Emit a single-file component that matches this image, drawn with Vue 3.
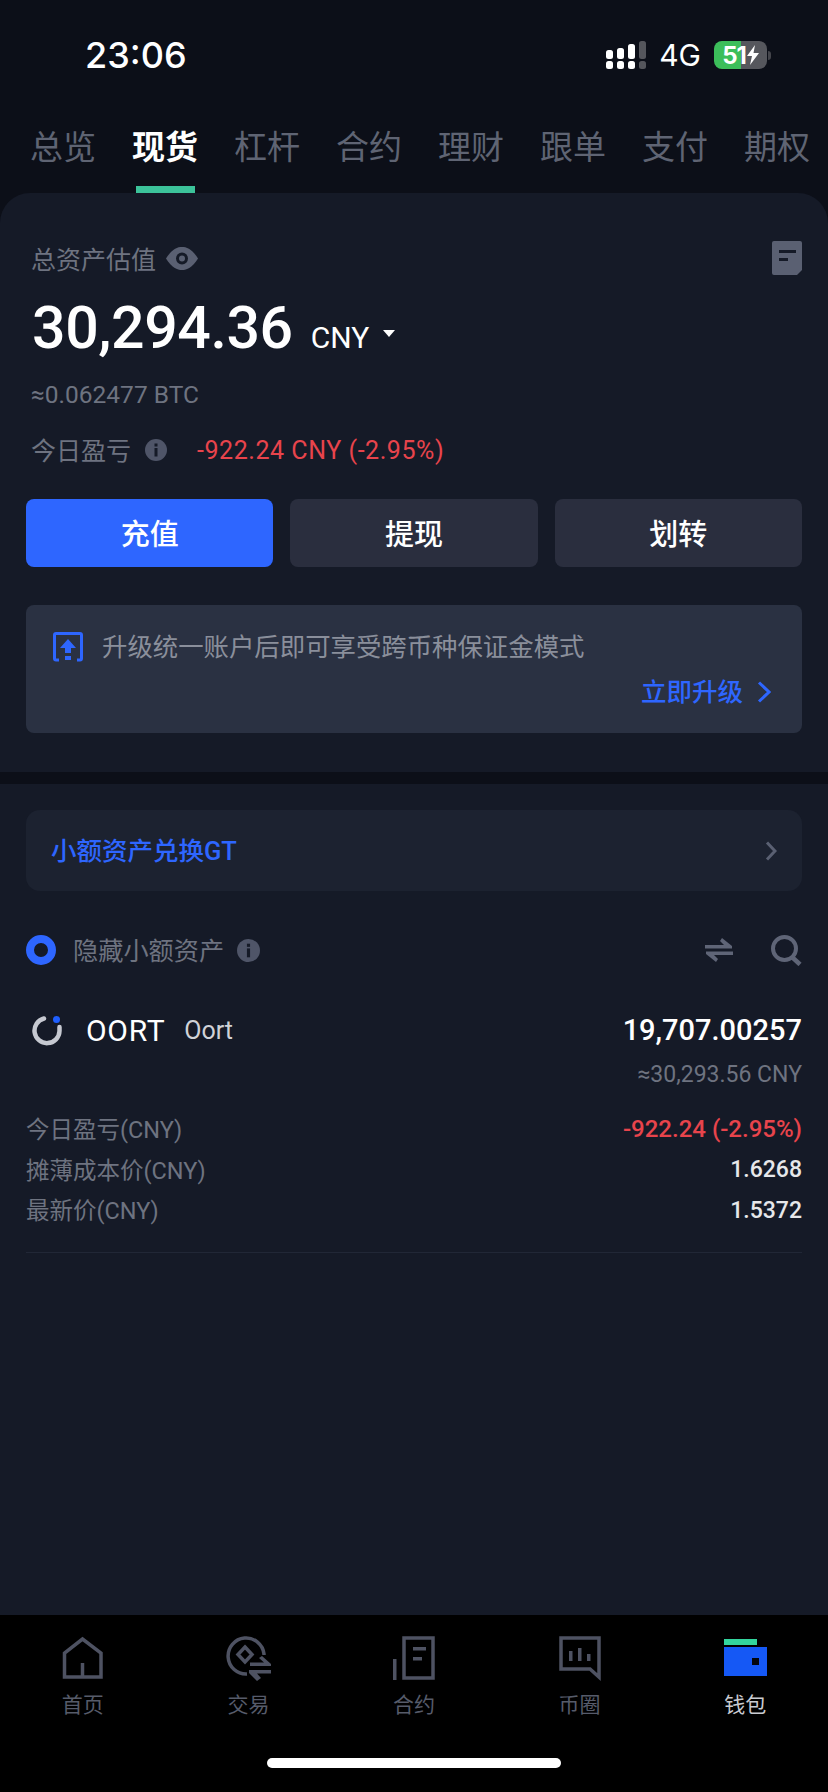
<template>
  <div class="page">
    <div class="status-bar">
      <span class="time">23:06</span>
      <div class="status-right">
        <svg class="signal" width="41" height="28" viewBox="0 0 41 28">
          <g fill="#fff">
            <rect x="0" y="9" width="7" height="9" rx="2.5" />
            <rect x="0" y="20" width="7" height="8" rx="2.5" />
            <rect x="11" y="7" width="7" height="11" rx="2.5" />
            <rect x="11" y="20" width="7" height="8" rx="2.5" />
            <rect x="22" y="3" width="7" height="15" rx="2.5" />
            <rect x="22" y="20" width="7" height="8" rx="2.5" />
          </g>
          <rect x="33" y="0" width="7" height="18" rx="2.5" fill="#55565c" />
          <rect x="33" y="20" width="7" height="8" rx="2.5" fill="#55565c" />
        </svg>
        <span class="net">4G</span>
        <div class="battery">
          <span class="battery-num">51</span>
          <svg width="12" height="20" viewBox="0 0 12 20"><path d="M8 0 L0 11 H5 L3 20 L12 8 H6.5 Z" fill="#fff" /></svg>
        </div>
        <span class="battery-nub"></span>
      </div>
    </div>

    <nav class="top-tabs">
      <div v-for="tab in topTabs" :key="tab" class="top-tab" :class="{ active: tab === '现货' }">
        <span class="top-tab-label">{{ tab }}</span>
        <span class="top-tab-line"></span>
      </div>
    </nav>

    <section class="asset-card">
      <div class="asset-title">
        <span>总资产估值</span>
        <svg width="32" height="23" viewBox="0 0 32 23">
          <path d="M0 11.5 C6 2 11 0 16 0 C21 0 26 2 32 11.5 C26 21 21 23 16 23 C11 23 6 21 0 11.5 Z" fill="#5a6072" />
          <circle cx="16" cy="11.5" r="6" fill="#151a27" />
          <circle cx="16" cy="11.5" r="3" fill="#5a6072" />
        </svg>
        <svg class="doc-icon" width="30" height="34" viewBox="0 0 30 34">
          <path d="M2 0 H28 Q30 0 30 2 V29 L25 34 H2 Q0 34 0 32 V2 Q0 0 2 0 Z" fill="#5a6072" />
          <rect x="7" y="9" width="17" height="3" fill="#151a27" />
          <rect x="7" y="17" width="9" height="3" fill="#151a27" />
        </svg>
      </div>

      <div class="balance">
        <span class="balance-num">30,294.36</span>
        <span class="balance-unit">CNY</span>
        <span class="caret"></span>
      </div>
      <div class="btc">≈0.062477 BTC</div>
      <div class="today">
        <span class="today-label">今日盈亏</span>
        <svg class="info" width="22" height="22" viewBox="0 0 22 22">
          <circle cx="11" cy="11" r="11" fill="#4f5568" />
          <rect x="9.5" y="4.5" width="3" height="3" fill="#151a27" />
          <rect x="9.5" y="9" width="3" height="8.5" fill="#151a27" />
        </svg>
        <span class="loss today-loss">-922.24 CNY (-2.95%)</span>
      </div>

      <div class="actions">
        <button type="button" class="action primary">充值</button>
        <button type="button" class="action">提现</button>
        <button type="button" class="action">划转</button>
      </div>

      <div class="banner">
        <div class="banner-top">
          <svg width="30" height="30" viewBox="0 0 30 30">
            <path d="M6 28 H3 Q1.5 28 1.5 26.5 V3 Q1.5 1.5 3 1.5 H27 Q28.5 1.5 28.5 3 V26.5 Q28.5 28 27 28 H24" fill="none" stroke="#2e66ff" stroke-width="3" />
            <path d="M15 7 L23 16 H18 V21 H12 V16 H7 Z" fill="#2e66ff" />
            <rect x="12" y="24" width="6" height="4" fill="#2e66ff" />
          </svg>
          <span class="banner-text">升级统一账户后即可享受跨币种保证金模式</span>
        </div>
        <div class="banner-link">
          <span class="banner-link-text">立即升级</span>
          <svg width="14" height="22" viewBox="0 0 14 22"><path d="M2 1.5 L12 11 L2 20.5" fill="none" stroke="#2e66ff" stroke-width="3" /></svg>
        </div>
      </div>
    </section>

    <section class="assets">
      <div class="exchange">
        <span class="exchange-text">小额资产兑换GT</span>
        <svg width="12" height="20" viewBox="0 0 12 20"><path d="M2 1.5 L10 10 L2 18.5" fill="none" stroke="#5a6072" stroke-width="3" /></svg>
      </div>

      <div class="tools">
        <span class="radio"></span>
        <span class="tools-label">隐藏小额资产</span>
        <svg class="info" width="23" height="23" viewBox="0 0 22 22">
          <circle cx="11" cy="11" r="11" fill="#4f5568" />
          <rect x="9.5" y="4.5" width="3" height="3" fill="#151a27" />
          <rect x="9.5" y="9" width="3" height="8.5" fill="#151a27" />
        </svg>
        <svg class="swap" width="28" height="24" viewBox="0 0 28 24">
          <path d="M17 0 L27 8 V10.5 H0 V7 H19 L15 3 Z" fill="#5f6577" />
          <path d="M11 24 L1 16 V13.5 H28 V17 H9 L13 21 Z" fill="#5f6577" />
        </svg>
        <svg width="31" height="31" viewBox="0 0 31 31">
          <circle cx="13.5" cy="13.5" r="11.5" fill="none" stroke="#5f6577" stroke-width="4" />
          <path d="M21 22 L29 29.5" fill="none" stroke="#5f6577" stroke-width="4.5" />
        </svg>
      </div>

      <div class="coin">
        <svg class="coin-logo" width="32" height="32" viewBox="0 0 32 32">
          <path d="M13 4.5 A12.5 12.5 0 1 0 28.5 17 V13" fill="none" stroke="#c6c9d1" stroke-width="4.5" stroke-linecap="round" />
          <circle cx="25.5" cy="5.5" r="3.5" fill="#1f5fff" />
        </svg>
        <span class="coin-symbol">OORT</span>
        <span class="coin-name">Oort</span>
        <span class="coin-amount">19,707.00257</span>
      </div>
      <div class="coin-approx">≈30,293.56 CNY</div>

      <div class="detail-rows">
        <div v-for="row in rows" :key="row.label" class="detail-row">
          <span class="detail-label">{{ row.label }}</span>
          <span class="detail-value" :class="{ loss: row.loss }">{{ row.value }}</span>
        </div>
      </div>
      <div class="line"></div>
    </section>

    <footer class="tabbar">
      <div class="tabbar-items">
        <div class="tabbar-item">
          <svg width="42" height="44" viewBox="0 0 42 44">
            <path d="M2.5 41 V17 L20.5 3 L39 17 V41 Z M20.5 41 V27" fill="none" stroke="#4e5262" stroke-width="3.5" />
          </svg>
          <span>首页</span>
        </div>
        <div class="tabbar-item">
          <svg width="48" height="46" viewBox="0 0 48 46">
            <path d="M40 20 V19 A18 18 0 1 0 23 39" fill="none" stroke="#4e5262" stroke-width="3.5" />
            <path d="M21 12 L28 19.5 L21 27 L14 19.5 Z" fill="none" stroke="#4e5262" stroke-width="3.5" />
            <path d="M38 21 L47 29 V31 H26 V27.5 H40 L35 23 Z" fill="#4e5262" />
            <path d="M33 46 L25 38 V35 H47 V38.5 H33 L37 43 Z" fill="#4e5262" />
          </svg>
          <span>交易</span>
        </div>
        <div class="tabbar-item">
          <svg width="42" height="44" viewBox="0 0 42 44">
            <path d="M11 2 H40 V42 H11 Z" fill="none" stroke="#4e5262" stroke-width="3.5" />
            <rect x="0" y="23" width="3.5" height="21" fill="#4e5262" />
            <rect x="20" y="11" width="13" height="3.5" fill="#4e5262" />
            <rect x="20" y="21" width="9" height="3.5" fill="#4e5262" />
          </svg>
          <span>合约</span>
        </div>
        <div class="tabbar-item">
          <svg width="42" height="44" viewBox="0 0 42 44">
            <path d="M2 2 H40 V41 L31 33 H2 Z" fill="none" stroke="#4e5262" stroke-width="3.5" stroke-linejoin="miter" />
            <rect x="10" y="15" width="3.5" height="10" fill="#4e5262" />
            <rect x="19" y="12" width="3.5" height="13" fill="#4e5262" />
            <rect x="28" y="18" width="3.5" height="7" fill="#4e5262" />
          </svg>
          <span>币圈</span>
        </div>
        <div class="tabbar-item current">
          <svg class="wallet" width="44" height="44" viewBox="0 0 44 44">
            <rect x="0" y="3" width="33" height="6" fill="#33d49d" />
            <rect x="0" y="11" width="43" height="29" fill="#1558f5" />
            <rect x="28" y="22" width="7" height="7" fill="#04060c" />
          </svg>
          <span>钱包</span>
        </div>
      </div>
      <div class="home-bar"></div>
    </footer>
  </div>
</template>

<script setup>
const topTabs = ['总览', '现货', '杠杆', '合约', '理财', '跟单', '支付', '期权']

const rows = [
  { label: '今日盈亏(CNY)', value: '-922.24 (-2.95%)', loss: true },
  { label: '摊薄成本价(CNY)', value: '1.6268' },
  { label: '最新价(CNY)', value: '1.5372' },
]
</script>

<style>
html,
body {
  margin: 0;
  background: #0c0f18;
}
</style>

<style scoped>
.page {
  width: 828px;
  height: 1792px;
  display: flex;
  flex-direction: column;
  overflow: hidden;
  background: #0c0f18;
  color: #fff;
  font-family: Roboto, "Noto Sans CJK SC", sans-serif;
}

/* status bar */
.status-bar {
  height: 110px;
  flex: none;
  display: flex;
  align-items: center;
  justify-content: space-between;
  padding: 0 57px 0 85px;
  box-sizing: border-box;
}
.time {
  font-family: Inter, sans-serif;
  font-size: 36px;
  font-weight: 500;
}
.status-right {
  display: flex;
  align-items: center;
}
.net {
  font-family: Inter, sans-serif;
  font-size: 30px;
  margin-left: 12px;
}
.battery {
  width: 53px;
  height: 28px;
  margin-left: 13px;
  border-radius: 8px;
  background: linear-gradient(to right, #3cbe5a 51%, #56575d 51%);
  display: flex;
  align-items: center;
  justify-content: center;
  gap: 1px;
}
.battery-num {
  font-family: Inter, sans-serif;
  font-size: 24px;
  font-weight: 700;
  letter-spacing: -1px;
}
.battery-nub {
  width: 3px;
  height: 9px;
  margin-left: 1px;
  border-radius: 0 3px 3px 0;
  background: #44454b;
}

/* top tabs */
.top-tabs {
  height: 83px;
  flex: none;
  display: flex;
  gap: 36px;
  padding-left: 30px;
}
.top-tab {
  width: 66px;
  flex: none;
  display: flex;
  flex-direction: column;
  align-items: center;
}
.top-tab-label {
  height: 72px;
  line-height: 76px;
  font-size: 33px;
  color: #5f6473;
  white-space: nowrap;
}
.top-tab-line {
  width: 59px;
  height: 7px;
  margin-top: 4px;
}
.top-tab.active .top-tab-label {
  color: #fff;
  font-weight: 700;
}
.top-tab.active .top-tab-line {
  background: #3cc39a;
}

/* asset card */
.asset-card {
  flex: none;
  padding: 45px 26px 39px;
  background: #151a27;
  border-radius: 30px 30px 0 0;
  margin-bottom: 12px;
}
.asset-title {
  height: 40px;
  display: flex;
  align-items: center;
  gap: 10px;
  padding-left: 5px;
  font-size: 25px;
  color: #6e7380;
}
.doc-icon {
  margin-left: auto;
}
.balance {
  height: 70px;
  margin-top: 15px;
  padding-left: 6px;
  display: flex;
  align-items: baseline;
  line-height: 70px;
}
.balance-num {
  font-size: 59px;
  font-weight: 500;
  letter-spacing: -0.4px;
}
.balance-unit {
  font-size: 30px;
  margin-left: 18px;
}
.caret {
  width: 0;
  height: 0;
  margin-left: 14px;
  border-left: 6px solid transparent;
  border-right: 6px solid transparent;
  border-top: 7px solid #fff;
  align-self: center;
  margin-top: 10px;
}
.btc {
  height: 40px;
  margin-top: 12px;
  padding-left: 5px;
  line-height: 40px;
  font-size: 24.5px;
  color: #6e7380;
}
.today {
  height: 40px;
  margin-top: 15px;
  padding-left: 5px;
  display: flex;
  align-items: center;
  font-size: 25px;
  color: #6e7380;
}
.today-label {
  margin-bottom: 3px;
}
.today .info {
  margin-left: 14px;
}
.today-loss {
  margin-left: 30px;
  letter-spacing: 0.55px;
}
.loss {
  color: #e8444c;
}
.actions {
  margin-top: 29px;
  display: flex;
  gap: 17px;
}
.action {
  flex: 1;
  height: 68px;
  padding: 0 0 2px;
  border: none;
  border-radius: 8px;
  background: #2a2e3e;
  color: #fff;
  font-family: inherit;
  font-size: 29px;
  font-weight: 500;
}
.action.primary {
  background: #2e66ff;
}
.banner {
  height: 128px;
  margin-top: 38px;
  padding: 27px 31px 0 27px;
  box-sizing: border-box;
  border-radius: 8px;
  background: #2a3142;
}
.banner-top {
  height: 30px;
  display: flex;
  align-items: center;
  gap: 19px;
  font-size: 25.4px;
  color: #8a8f9b;
  white-space: nowrap;
}
.banner-text {
  margin-bottom: 4px;
}
.banner-link {
  margin-top: 15px;
  height: 30px;
  display: flex;
  align-items: center;
  justify-content: flex-end;
  gap: 14px;
  font-size: 25.5px;
  font-weight: 500;
  color: #2e66ff;
}
.banner-link-text {
  margin-bottom: 6px;
}

/* asset list */
.assets {
  flex: 1;
  padding: 26px 26px 0;
  background: #151a27;
}
.exchange {
  height: 81px;
  padding: 0 25px;
  display: flex;
  align-items: center;
  justify-content: space-between;
  box-sizing: border-box;
  border-radius: 14px;
  background: #1c2230;
  font-size: 25.5px;
  font-weight: 500;
  color: #2e66ff;
}
.exchange-text {
  margin-bottom: 4px;
}
.tools {
  height: 40px;
  margin-top: 39px;
  display: flex;
  align-items: center;
  font-size: 25px;
  color: #6e7380;
}
.radio {
  width: 30px;
  height: 30px;
  box-sizing: border-box;
  border: 8px solid #2e66ff;
  border-radius: 50%;
}
.tools-label {
  margin-left: 17px;
  margin-bottom: 2px;
  font-size: 25.2px;
}
.tools .info {
  margin-left: 13px;
}
.swap {
  margin-left: auto;
  margin-right: 38px;
}
.coin {
  height: 40px;
  margin-top: 40px;
  padding-left: 5px;
  display: flex;
  align-items: center;
}
.coin-logo {
  flex: none;
}
.coin-symbol {
  margin-left: 23px;
  font-size: 30px;
  letter-spacing: 0.7px;
}
.coin-name {
  margin-left: 19px;
  font-size: 25px;
  color: #d0d2d8;
}
.coin-amount {
  margin-left: auto;
  font-size: 29px;
  font-weight: 500;
}
.coin-approx {
  height: 40px;
  margin-top: 5px;
  line-height: 40px;
  text-align: right;
  font-size: 23px;
  color: #6e7380;
}
.detail-rows {
  margin-top: 14px;
}
.detail-row {
  height: 40.5px;
  display: flex;
  align-items: center;
  justify-content: space-between;
  font-size: 23.5px;
}
.detail-label {
  color: #6e7380;
  margin-bottom: 2px;
}
.detail-value {
  font-size: 23px;
  font-weight: 500;
  color: #e6e7ea;
}
.detail-value.loss {
  font-size: 24px;
  color: #e8444c;
}
.line {
  height: 1px;
  margin-top: 21px;
  background: #212736;
}

/* bottom tab bar */
.tabbar {
  height: 177px;
  flex: none;
  background: #000;
  display: flex;
  flex-direction: column;
  align-items: center;
}
.tabbar-items {
  width: 100%;
  margin-top: 20px;
  display: grid;
  grid-template-columns: repeat(5, 1fr);
}
.tabbar-item {
  display: flex;
  flex-direction: column;
  align-items: center;
  font-size: 21px;
  color: #565b6a;
}
.tabbar-item svg {
  height: 46px;
}
.tabbar-item .wallet {
  margin-left: 2px;
}
.tabbar-item span {
  margin-top: 9px;
  line-height: 30px;
}
.tabbar-item.current {
  color: #c9cbd1;
}
.home-bar {
  width: 294px;
  height: 10px;
  margin-top: 38px;
  border-radius: 5px;
  background: #fff;
}
</style>
